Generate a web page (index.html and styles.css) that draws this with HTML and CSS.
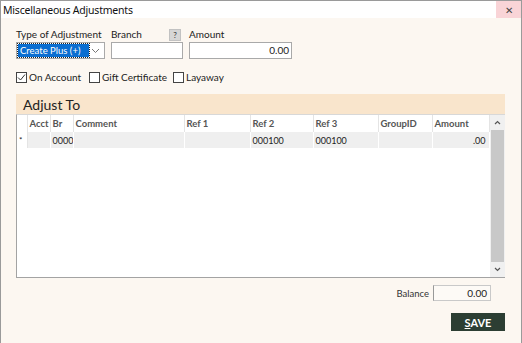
FILE: index.html
```html
<!DOCTYPE html>
<html lang="en">
<head>
  <meta charset="UTF-8" />
  <title>Miscellaneous Adjustments</title>
  <link rel="stylesheet" href="styles.css">
</head>
<body>
  <div class="window">
    <div class="titlebar">
      <span class="title">Miscellaneous Adjustments</span>
      <span class="close">&#x2715;</span>
    </div>

    <div class="content">
      <!-- top fields -->
      <div class="fields">
        <div class="field f-type">
          <label>Type of Adjustment</label>
          <div class="select">
            <span class="sel-text">Create Plus (+)</span>
            <svg class="chev" width="9" height="6" viewBox="0 0 9 6"><path d="M1 1 L4.5 4.5 L8 1" fill="none" stroke="#777" stroke-width="1"/></svg>
          </div>
        </div>
        <div class="field f-branch">
          <div class="label-row">
            <label>Branch</label>
            <span class="help">?</span>
          </div>
          <div class="input"></div>
        </div>
        <div class="field f-amount">
          <label>Amount</label>
          <div class="input num">0.00</div>
        </div>
      </div>

      <!-- checkboxes -->
      <div class="checks">
        <span class="check c-account"><span class="box on">
          <svg width="9" height="9" viewBox="0 0 9 9"><path d="M1 4.5 L3.5 7 L8 1.5" fill="none" stroke="#333" stroke-width="1"/></svg>
        </span>On Account</span>
        <span class="check c-gift"><span class="box"></span>Gift Certificate</span>
        <span class="check"><span class="box"></span>Layaway</span>
      </div>

      <!-- Adjust To grid -->
      <div class="panel">
        <div class="panel-head">Adjust To</div>
        <div class="grid-wrap">
          <table class="grid">
            <colgroup>
              <col style="width:10px">
              <col style="width:23px">
              <col style="width:23px">
              <col style="width:111px">
              <col style="width:66px">
              <col style="width:63px">
              <col style="width:65px">
              <col style="width:54px">
              <col style="width:57px">
            </colgroup>
            <tr class="hdr">
              <td class="rh"></td>
              <td>Acct</td>
              <td>Br</td>
              <td>Comment</td>
              <td>Ref 1</td>
              <td>Ref 2</td>
              <td>Ref 3</td>
              <td>GroupID</td>
              <td>Amount</td>
            </tr>
            <tr class="row">
              <td class="rh">*</td>
              <td></td>
              <td>0000</td>
              <td></td>
              <td></td>
              <td>000100</td>
              <td>000100</td>
              <td></td>
              <td class="num">.00</td>
            </tr>
          </table>
          <div class="scrollbar">
            <div class="arrow">
              <svg width="7" height="5" viewBox="0 0 7 5"><path d="M1 4 L3.5 1.5 L6 4" fill="none" stroke="#555" stroke-width="1.2"/></svg>
            </div>
            <div class="thumb"></div>
            <div class="arrow">
              <svg width="7" height="5" viewBox="0 0 7 5"><path d="M1 1 L3.5 3.5 L6 1" fill="none" stroke="#555" stroke-width="1.2"/></svg>
            </div>
          </div>
        </div>
      </div>

      <!-- footer -->
      <div class="balance">
        <span class="bal-label">Balance</span>
        <div class="bal-box">0.00</div>
      </div>
      <div class="actions">
        <button class="save"><u>S</u>AVE</button>
      </div>
    </div>
  </div>
</body>
</html>
```

FILE: styles.css
```css
body {
  margin: 0;
  font-family: Lato, "Noto Sans", sans-serif;
  font-size: 10px;
  color: #222;
}

.window {
  width: 522px;
  height: 343px;
  box-sizing: border-box;
  border-left: 1px solid #9a9a9a;
  border-right: 1px solid #9a9a9a;
  background: #fcf7f1;
  display: flex;
  flex-direction: column;
}

.titlebar {
  height: 18px;
  background: #fff;
  display: flex;
  align-items: center;
  justify-content: space-between;
  border-top: 1px solid #9a9a9a;
  box-sizing: border-box;
}

.title {
  padding-left: 2px;
  font-family: "Noto Sans", sans-serif;
  font-size: 10.5px;
  letter-spacing: -0.2px;
  color: #111;
}

.close {
  width: 25px;
  height: 17px;
  background: #f9d4d7;
  display: flex;
  align-items: center;
  justify-content: center;
  font-size: 10px;
  color: #444;
}

.content {
  flex: 1;
  padding: 11px 16px 0 15px;
  display: flex;
  flex-direction: column;
}

.fields {
  display: flex;
  gap: 6px;
}

.field {
  display: flex;
  flex-direction: column;
}

.field label {
  height: 12px;
  line-height: 11px;
  font-size: 10px;
  white-space: nowrap;
  color: #222;
}

.f-type { width: 89px; }
.f-branch { width: 72px; }
.f-amount { width: 103px; }

.label-row {
  display: flex;
  justify-content: space-between;
  align-items: flex-start;
}

.help {
  width: 10px;
  height: 10px;
  margin-right: 2px;
  background: #d6d6d6;
  border: 1px solid #c2c2c2;
  font-size: 8px;
  line-height: 10px;
  text-align: center;
  color: #333;
}

.select, .input {
  height: 17px;
  box-sizing: border-box;
  border: 1px solid #a9a9a9;
  background: #fff;
  margin-top: 1px;
}

.select {
  display: flex;
  align-items: center;
  justify-content: space-between;
  padding: 1px 4px 1px 1px;
}

.sel-text {
  background: #0a6ed1;
  color: #fff;
  font-size: 9.5px;
  height: 13px;
  line-height: 13px;
  padding: 0 3px 0 2px;
  width: 66px;
  white-space: nowrap;
  outline: 1px dotted #222;
}

.input.num {
  text-align: right;
  padding-right: 2px;
  line-height: 15px;
  font-size: 10px;
}

.checks {
  display: flex;
  margin-top: 12px;
  height: 12px;
  align-items: center;
}

.check {
  display: flex;
  align-items: center;
  font-size: 10px;
  white-space: nowrap;
  color: #222;
}

.c-account { width: 73px; }
.c-gift { width: 84px; }

.box {
  width: 11px;
  height: 11px;
  box-sizing: border-box;
  border: 1px solid #444;
  background: #fff;
  margin-right: 2px;
  display: flex;
  align-items: center;
  justify-content: center;
}

.panel {
  margin-top: 11px;
  width: 489px;
  height: 184px;
  display: flex;
  flex-direction: column;
}

.panel-head {
  height: 20px;
  background: #f9e5cc;
  padding-left: 7px;
  font-size: 14px;
  line-height: 21px;
  color: #222;
}

.grid-wrap {
  flex: 1;
  display: flex;
  background: #fff;
  border-left: 1px solid #a3a3a3;
  border-bottom: 1px solid #a3a3a3;
  border-top: 1px solid #d8d8d8;
}

.grid {
  border-collapse: collapse;
  table-layout: fixed;
  width: 472px;
  align-self: flex-start;
  font-size: 9px;
}

.grid td {
  box-sizing: border-box;
  padding: 0 0 0 2px;
  height: 16px;
  border-right: 1px solid #e4e4e4;
  white-space: nowrap;
  overflow: hidden;
}

.hdr td {
  font-weight: 700;
  font-size: 9.5px;
  color: #555;
  height: 17px;
}

.row td {
  background: #efefef;
  border-right-color: #fff;
  color: #222;
}

.grid .rh {
  padding-left: 2px;
  background: #fff;
  border-right: 1px solid #e4e4e4;
  font-size: 8px;
}

.grid td.num {
  text-align: right;
  padding-right: 3px;
}

.scrollbar {
  width: 15px;
  margin-left: auto;
  background: #f0f0f0;
  display: flex;
  flex-direction: column;
}

.arrow {
  height: 15px;
  display: flex;
  align-items: center;
  justify-content: center;
}

.thumb {
  flex: 1;
  margin: 0 1px;
  background: #c8c8c8;
}

.balance {
  display: flex;
  justify-content: flex-end;
  align-items: center;
  margin-top: 7px;
  padding-right: 14px;
}

.bal-label {
  font-size: 9.5px;
  color: #333;
  margin-right: 4px;
}

.bal-box {
  width: 58px;
  height: 16px;
  box-sizing: border-box;
  border: 1px solid #c9c9c9;
  border-left-color: #999;
  background: #fdfaf6;
  text-align: right;
  padding-right: 3px;
  font-size: 10px;
  line-height: 14px;
}

.actions {
  display: flex;
  justify-content: flex-end;
  margin-top: 12px;
}

.save {
  width: 54px;
  height: 18px;
  border: none;
  background: #2c3e33;
  color: #fff;
  font-family: Lato, sans-serif;
  font-weight: 700;
  font-size: 11px;
  padding: 0;
  cursor: pointer;
}
```
